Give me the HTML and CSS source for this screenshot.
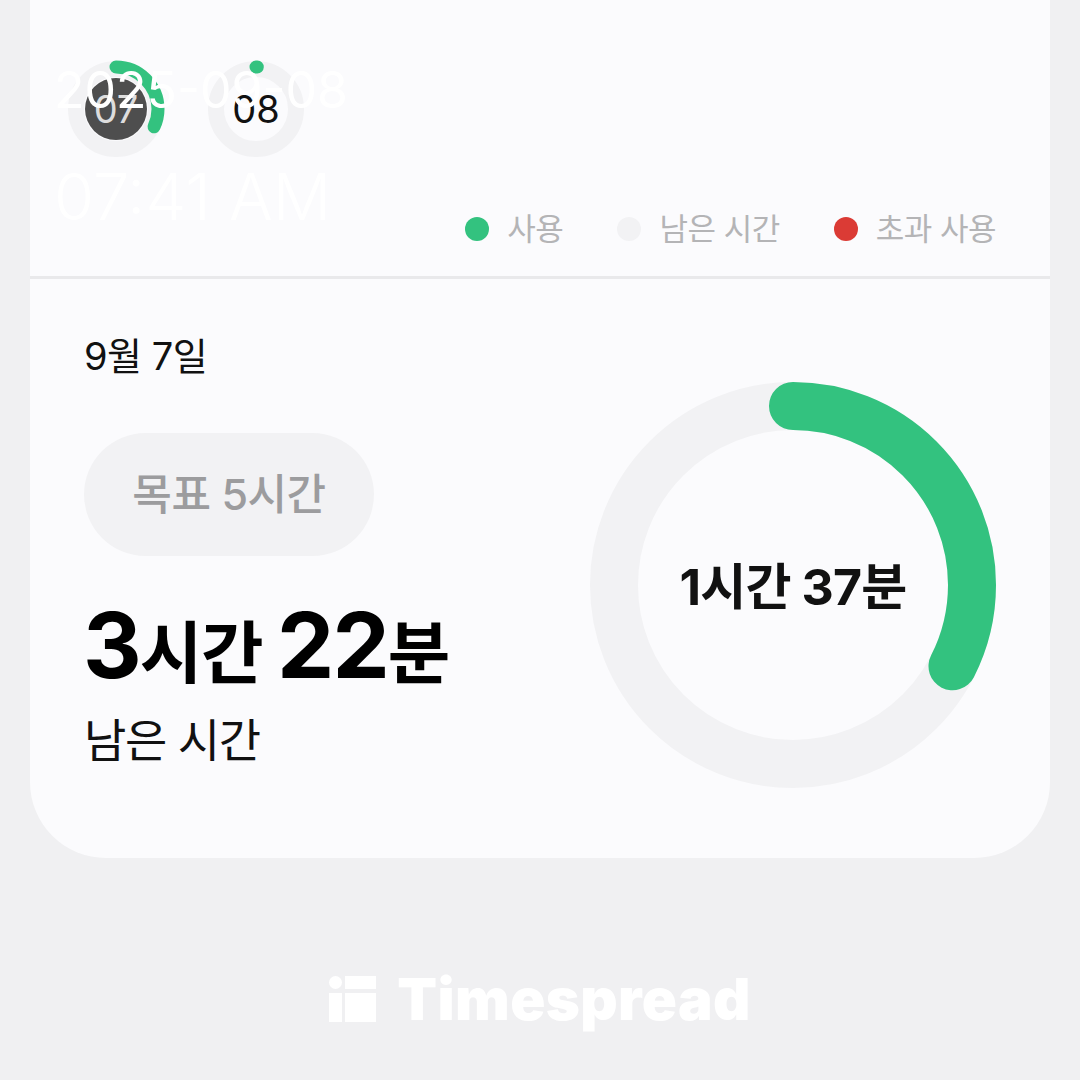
FILE: index.html
```html
<!DOCTYPE html>
<html lang="ko">
<head>
  <meta charset="UTF-8" />
  <title>Timespread</title>
  <link rel="stylesheet" href="styles.css">
</head>
<body>
  <div class="stamp">
    <div class="stamp-date">2025-09-08</div>
    <div class="stamp-time">07:41 AM</div>
  </div>

  <div class="card">
    <div class="week">
      <div class="days">
        <div class="day">
          <svg class="ring" viewBox="0 0 96 96">
            <circle class="ring-bg" cx="48" cy="48" r="40" />
            <circle class="ring-fill" cx="48" cy="48" r="42" pathLength="100" stroke-dasharray="32 100" transform="rotate(-90 48 48)" />
          </svg>
          <span class="day-num today">07</span>
        </div>
        <div class="day">
          <svg class="ring" viewBox="0 0 96 96">
            <circle class="ring-bg" cx="48" cy="48" r="40" />
            <circle class="ring-fill" cx="48" cy="48" r="42" pathLength="100" stroke-dasharray="0.5 100" transform="rotate(-90 48 48)" />
          </svg>
          <span class="day-num">08</span>
        </div>
      </div>
      <div class="legend">
        <div class="legend-item"><span class="dot used"></span>사용</div>
        <div class="legend-item"><span class="dot left"></span>남은 시간</div>
        <div class="legend-item"><span class="dot over"></span>초과 사용</div>
      </div>
    </div>

    <div class="detail">
      <div class="summary">
        <div class="date">9월 7일</div>
        <div class="goal">목표 5시간</div>
        <div class="remain"><b>3</b>시간 <b>22</b>분</div>
        <div class="remain-label">남은 시간</div>
      </div>
      <div class="donut">
        <svg viewBox="0 0 406 406">
          <circle class="donut-bg" cx="203" cy="203" r="179" />
          <circle class="donut-fill" cx="203" cy="203" r="179" pathLength="100" stroke-dasharray="32.5 100" transform="rotate(-90 203 203)" />
        </svg>
        <div class="donut-label">1시간 37분</div>
      </div>
    </div>
  </div>

  <div class="brand">
    <svg class="brand-icon" viewBox="0 0 47 46">
      <circle cx="6.5" cy="6.5" r="6.5" />
      <rect x="16" y="0" width="31" height="13" />
      <rect x="0" y="17" width="13" height="29" />
      <rect x="16" y="17" width="31" height="29" />
    </svg>
    <span class="brand-name">Timespread</span>
  </div>
</body>
</html>
```

FILE: styles.css
```css
:root {
  --bg: #f0f0f2;
  --card: #fbfbfd;
  --green: #33c27f;
  --track: #f2f2f4;
  --muted: #b4b4b6;
}

* {
  box-sizing: border-box;
}

body {
  margin: 0;
  width: 1080px;
  height: 1080px;
  overflow: hidden;
  background: var(--bg);
  color: #111;
  font-family: Inter, 'Noto Sans CJK KR', sans-serif;
  padding: 0 30px;
}

.card {
  height: 858px;
  background: var(--card);
  border-radius: 0 0 76px 76px;
}

.week {
  height: 279px;
  padding: 61px 54px 0 38px;
  border-bottom: 3px solid #e9e9eb;
}

.days {
  display: flex;
  gap: 44px;
}

.day {
  position: relative;
  width: 96px;
  height: 96px;
}

.ring {
  display: block;
  width: 96px;
  height: 96px;
  overflow: visible;
}

.ring-bg {
  fill: none;
  stroke: var(--track);
  stroke-width: 16;
}

.ring-fill {
  fill: none;
  stroke: var(--green);
  stroke-width: 13;
  stroke-linecap: round;
}

.day-num {
  position: absolute;
  left: 17px;
  top: 17px;
  width: 62px;
  height: 62px;
  border-radius: 50%;
  display: flex;
  align-items: center;
  justify-content: center;
  font-size: 38px;
}

.today {
  background: #4e4e4e;
  color: #ddd;
}

.legend {
  display: flex;
  justify-content: flex-end;
  gap: 54px;
  margin-top: 52px;
}

.legend-item {
  display: flex;
  align-items: center;
  gap: 18px;
  font-size: 31px;
  line-height: 40px;
  letter-spacing: -0.5px;
  color: var(--muted);
}

.dot {
  width: 24px;
  height: 24px;
  border-radius: 50%;
}

.used { background: var(--green); }
.left { background: var(--track); }
.over { background: #db3b35; }

.detail {
  display: flex;
  justify-content: space-between;
  padding: 54px 54px 0;
}

.date {
  font-size: 38px;
  line-height: 46px;
  letter-spacing: -0.5px;
}

.goal {
  display: inline-block;
  margin-top: 54px;
  height: 123px;
  width: 290px;
  border-radius: 62px;
  background: var(--track);
  color: #9c9c9e;
  font-size: 43px;
  font-weight: 500;
  line-height: 123px;
  text-align: center;
  letter-spacing: -0.5px;
}

.remain {
  margin-top: 39px;
  margin-left: -1px;
  font-size: 68px;
  font-weight: 700;
  line-height: 100px;
  letter-spacing: -1.3px;
  color: #000;
}

.remain b {
  font-size: 91px;
  font-weight: 700;
  letter-spacing: -2px;
}

.remain-label {
  margin-top: 8px;
  font-size: 46px;
  line-height: 58px;
  letter-spacing: -1.3px;
}

.donut {
  position: relative;
  width: 406px;
  height: 406px;
  margin-top: 49px;
}

.donut svg {
  display: block;
  width: 406px;
  height: 406px;
}

.donut-bg {
  fill: none;
  stroke: var(--track);
  stroke-width: 48;
}

.donut-fill {
  fill: none;
  stroke: var(--green);
  stroke-width: 48;
  stroke-linecap: round;
}

.donut-label {
  position: absolute;
  inset: 0;
  display: flex;
  align-items: center;
  justify-content: center;
  padding-bottom: 5px;
  font-size: 50px;
  font-weight: 700;
  letter-spacing: -0.8px;
  color: #111;
}

.brand {
  display: flex;
  align-items: center;
  justify-content: center;
  gap: 21px;
  margin-top: 106px;
  color: #fff;
}

.brand-icon {
  width: 47px;
  height: 46px;
  fill: #fff;
}

.brand-name {
  font-size: 58px;
  font-weight: 900;
  line-height: 70px;
  letter-spacing: 0.4px;
}

/* capture overlay on top of the app */
.stamp {
  position: absolute;
  left: 54px;
  top: 55px;
  color: #fff;
  z-index: 2;
}

.stamp-date {
  font-size: 50px;
  line-height: 70px;
}

.stamp-time {
  margin-top: 34px;
  font-size: 65px;
  font-weight: 300;
  line-height: 76px;
}
```
